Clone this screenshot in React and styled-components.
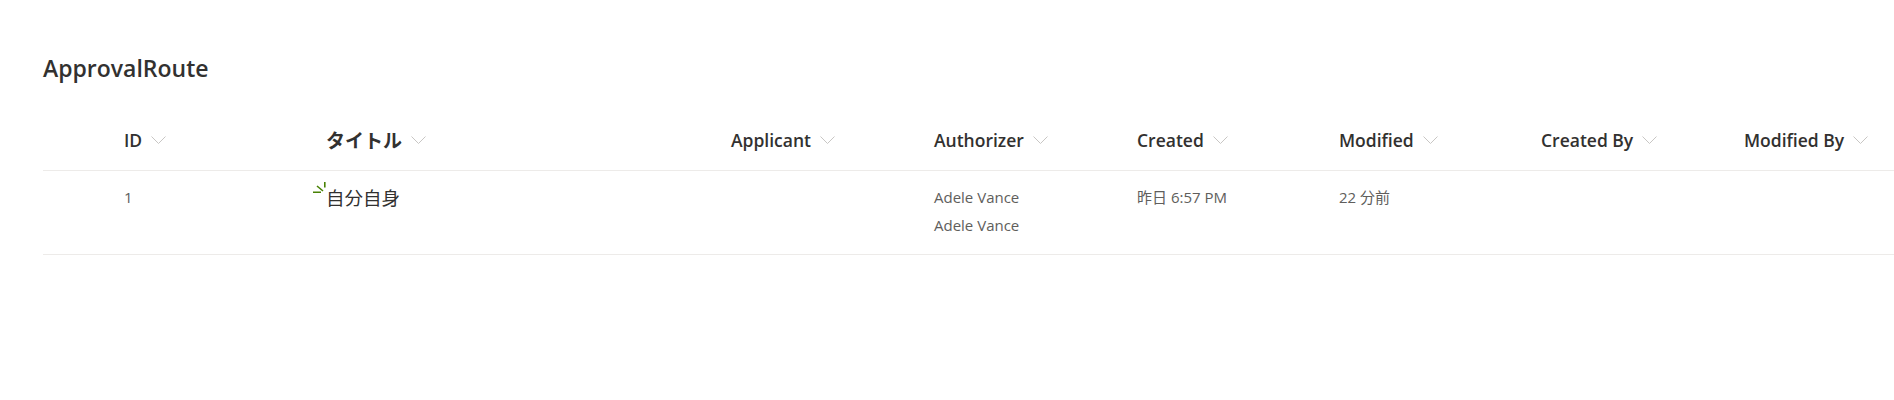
import React from 'react'
import styled, { createGlobalStyle } from 'styled-components'

const GlobalStyle = createGlobalStyle`
  body {
    margin: 0;
    background: #ffffff;
    font-family: "Open Sans", "Noto Sans", "Noto Sans CJK JP", sans-serif;
  }
`

const Page = styled.div`
  padding: 52px 0 0 43px;
  overflow: hidden;
`

const ListTitle = styled.div`
  font-size: 23px;
  line-height: 32px;
  font-weight: 600;
  color: #323130;
`

const Table = styled.div`
  margin-top: 30px;
`

const Row = styled.div`
  display: grid;
  grid-template-columns: 81px 202px 405px 203px 203px 202px 202px 203px 1fr;
  border-bottom: 1px solid #edebe9;
  height: ${({ $height }) => $height}px;
  align-items: ${({ $header }) => ($header ? 'center' : 'start')};
`

const HeaderCell = styled.div`
  display: flex;
  align-items: center;
  gap: 9px;
  padding-top: 7px;
  font-size: ${({ $big }) => ($big ? '19px' : '17.5px')};
  font-weight: ${({ $big }) => ($big ? 700 : 600)};
  color: #323130;
  white-space: nowrap;
  font-family: "Open Sans", "Noto Sans CJK JP", sans-serif;
`

const Cell = styled.div`
  padding-top: 12px;
  font-size: 15px;
  line-height: 28px;
  color: #605e5c;
  white-space: nowrap;
  font-family: "Open Sans", "Noto Sans CJK JP", sans-serif;
`

const TitleCell = styled(Cell)`
  position: relative;
  font-size: 18.5px;
  padding-top: 13px;
  color: #323130;
`

const NewBadge = styled.svg`
  position: absolute;
  left: -13px;
  top: 11px;
`

const Chevron = () => (
  <svg width="15" height="8" viewBox="0 0 15 8">
    <path d="M0.5 0.5 L7.5 7.5 L14.5 0.5" fill="none" stroke="#c8c6c4" strokeWidth="1" />
  </svg>
)

const columns = [
  { key: 'id', label: 'ID' },
  { key: 'title', label: 'タイトル', big: true },
  { key: 'applicant', label: 'Applicant' },
  { key: 'authorizer', label: 'Authorizer' },
  { key: 'created', label: 'Created' },
  { key: 'modified', label: 'Modified' },
  { key: 'createdBy', label: 'Created By' },
  { key: 'modifiedBy', label: 'Modified By' },
]

const App = () => {
  return (
    <Page>
      <GlobalStyle />
      <ListTitle>ApprovalRoute</ListTitle>
      <Table>
        <Row $header $height={56}>
          <div />
          {columns.map((c) => (
            <HeaderCell key={c.key} $big={c.big}>
              {c.label}
              <Chevron />
            </HeaderCell>
          ))}
          <div />
        </Row>
        <Row $height={83}>
          <div />
          <Cell>1</Cell>
          <TitleCell>
            <NewBadge width="14" height="11" viewBox="0 0 14 11">
              <path d="M11.8 0 V5.5 M4 4 L10 9 M0 10.2 H8" stroke="#498205" strokeWidth="1.6" fill="none" />
            </NewBadge>
            自分自身
          </TitleCell>
          <Cell />
          <Cell>
            Adele Vance
            <br />
            Adele Vance
          </Cell>
          <Cell>昨日 6:57 PM</Cell>
          <Cell>22 分前</Cell>
          <Cell />
          <Cell />
          <Cell />
        </Row>
      </Table>
    </Page>
  )
}

export default App
